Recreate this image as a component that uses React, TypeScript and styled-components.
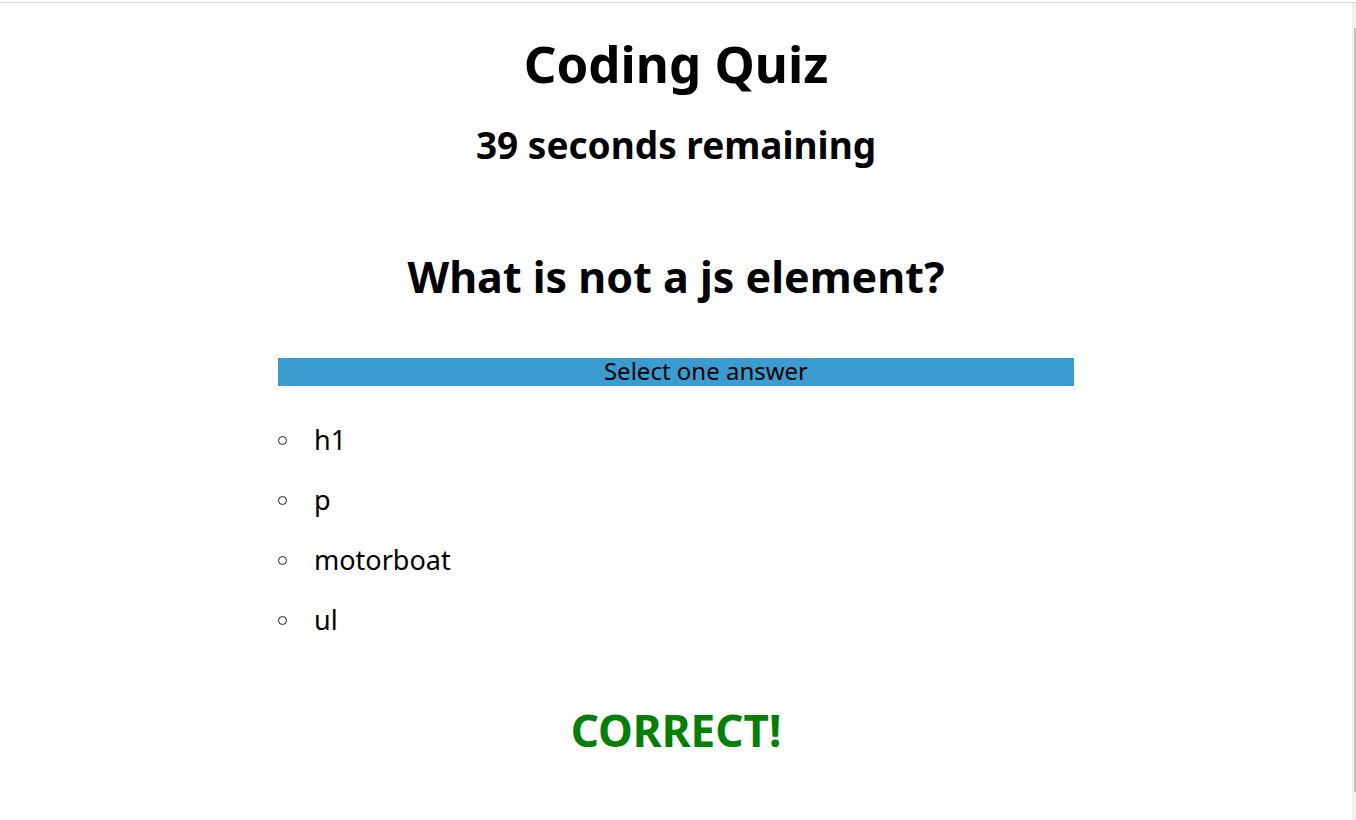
import React from "react";
import styled, { createGlobalStyle } from "styled-components";

const GlobalStyle = createGlobalStyle`
  *, *::before { box-sizing: border-box; }
  body {
    margin: 0;
    background: #fff;
    color: #000;
    font-family: "Lucida Sans", "Noto Sans", "Open Sans", sans-serif;
  }
`;

const Page = styled.div`
  display: flex;
  min-height: 100vh;
  padding-top: 2px;
`;

const Frame = styled.div`
  display: flex;
  flex: 1;
  border-top: 1px solid #d9d9d9;
`;

const Main = styled.main`
  flex: 1;
  display: flex;
  flex-direction: column;
  align-items: center;
  padding: 28px 16px;
`;

const Track = styled.div`
  display: flex;
  width: 4px;
  padding: 25px 0 28px 2px;
  background: #f0f0f0;
`;

const Thumb = styled.div`
  flex: 1;
  background: #c1c1c1;
`;

const Title = styled.h1`
  margin: 0;
  font-size: 51px;
  line-height: 64px;
  font-weight: 700;
`;

const Timer = styled.h2`
  margin: 24px 0 0;
  font-size: 37px;
  line-height: 52px;
  font-weight: 700;
`;

const Question = styled.h2`
  margin: 76px 0 0;
  font-size: 43px;
  line-height: 60px;
  font-weight: 700;
`;

const Quiz = styled.section`
  width: 100%;
  max-width: 796px;
  margin-top: 51px;
`;

const Prompt = styled.p`
  margin: 0;
  padding: 0 0 2px 60px;
  background: #3b9ccf;
  text-align: center;
  font-size: 24px;
  line-height: 26px;
`;

const Answers = styled.ul`
  list-style: none;
  margin: 24px 0 0;
  padding: 0;
`;

const Answer = styled.li`
  display: flex;
  align-items: center;
  gap: 27px;
  height: 60px;

  &::before {
    content: "";
    width: 9px;
    height: 9px;
    border: 1px solid #222;
    border-radius: 50%;
  }
`;

const AnswerButton = styled.button`
  padding: 0;
  border: 0;
  background: none;
  color: inherit;
  font-family: inherit;
  font-size: 27px;
  line-height: 36px;
  cursor: pointer;
`;

const Result = styled.h2`
  margin: 50px 0 0;
  color: #008000;
  font-size: 44px;
  line-height: 60px;
  font-weight: 700;
`;

const answers = ["h1", "p", "motorboat", "ul"];

export default function App() {
  return (
    <Page>
      <GlobalStyle />
      <Frame>
        <Main>
          <Title>Coding Quiz</Title>
          <Timer>39 seconds remaining</Timer>
          <Question>What is not a js element?</Question>
          <Quiz>
            <Prompt>Select one answer</Prompt>
            <Answers>
              {answers.map((answer) => (
                <Answer key={answer}>
                  <AnswerButton type="button">{answer}</AnswerButton>
                </Answer>
              ))}
            </Answers>
          </Quiz>
          <Result role="status">CORRECT!</Result>
        </Main>
        <Track aria-hidden="true">
          <Thumb />
        </Track>
      </Frame>
    </Page>
  );
}
